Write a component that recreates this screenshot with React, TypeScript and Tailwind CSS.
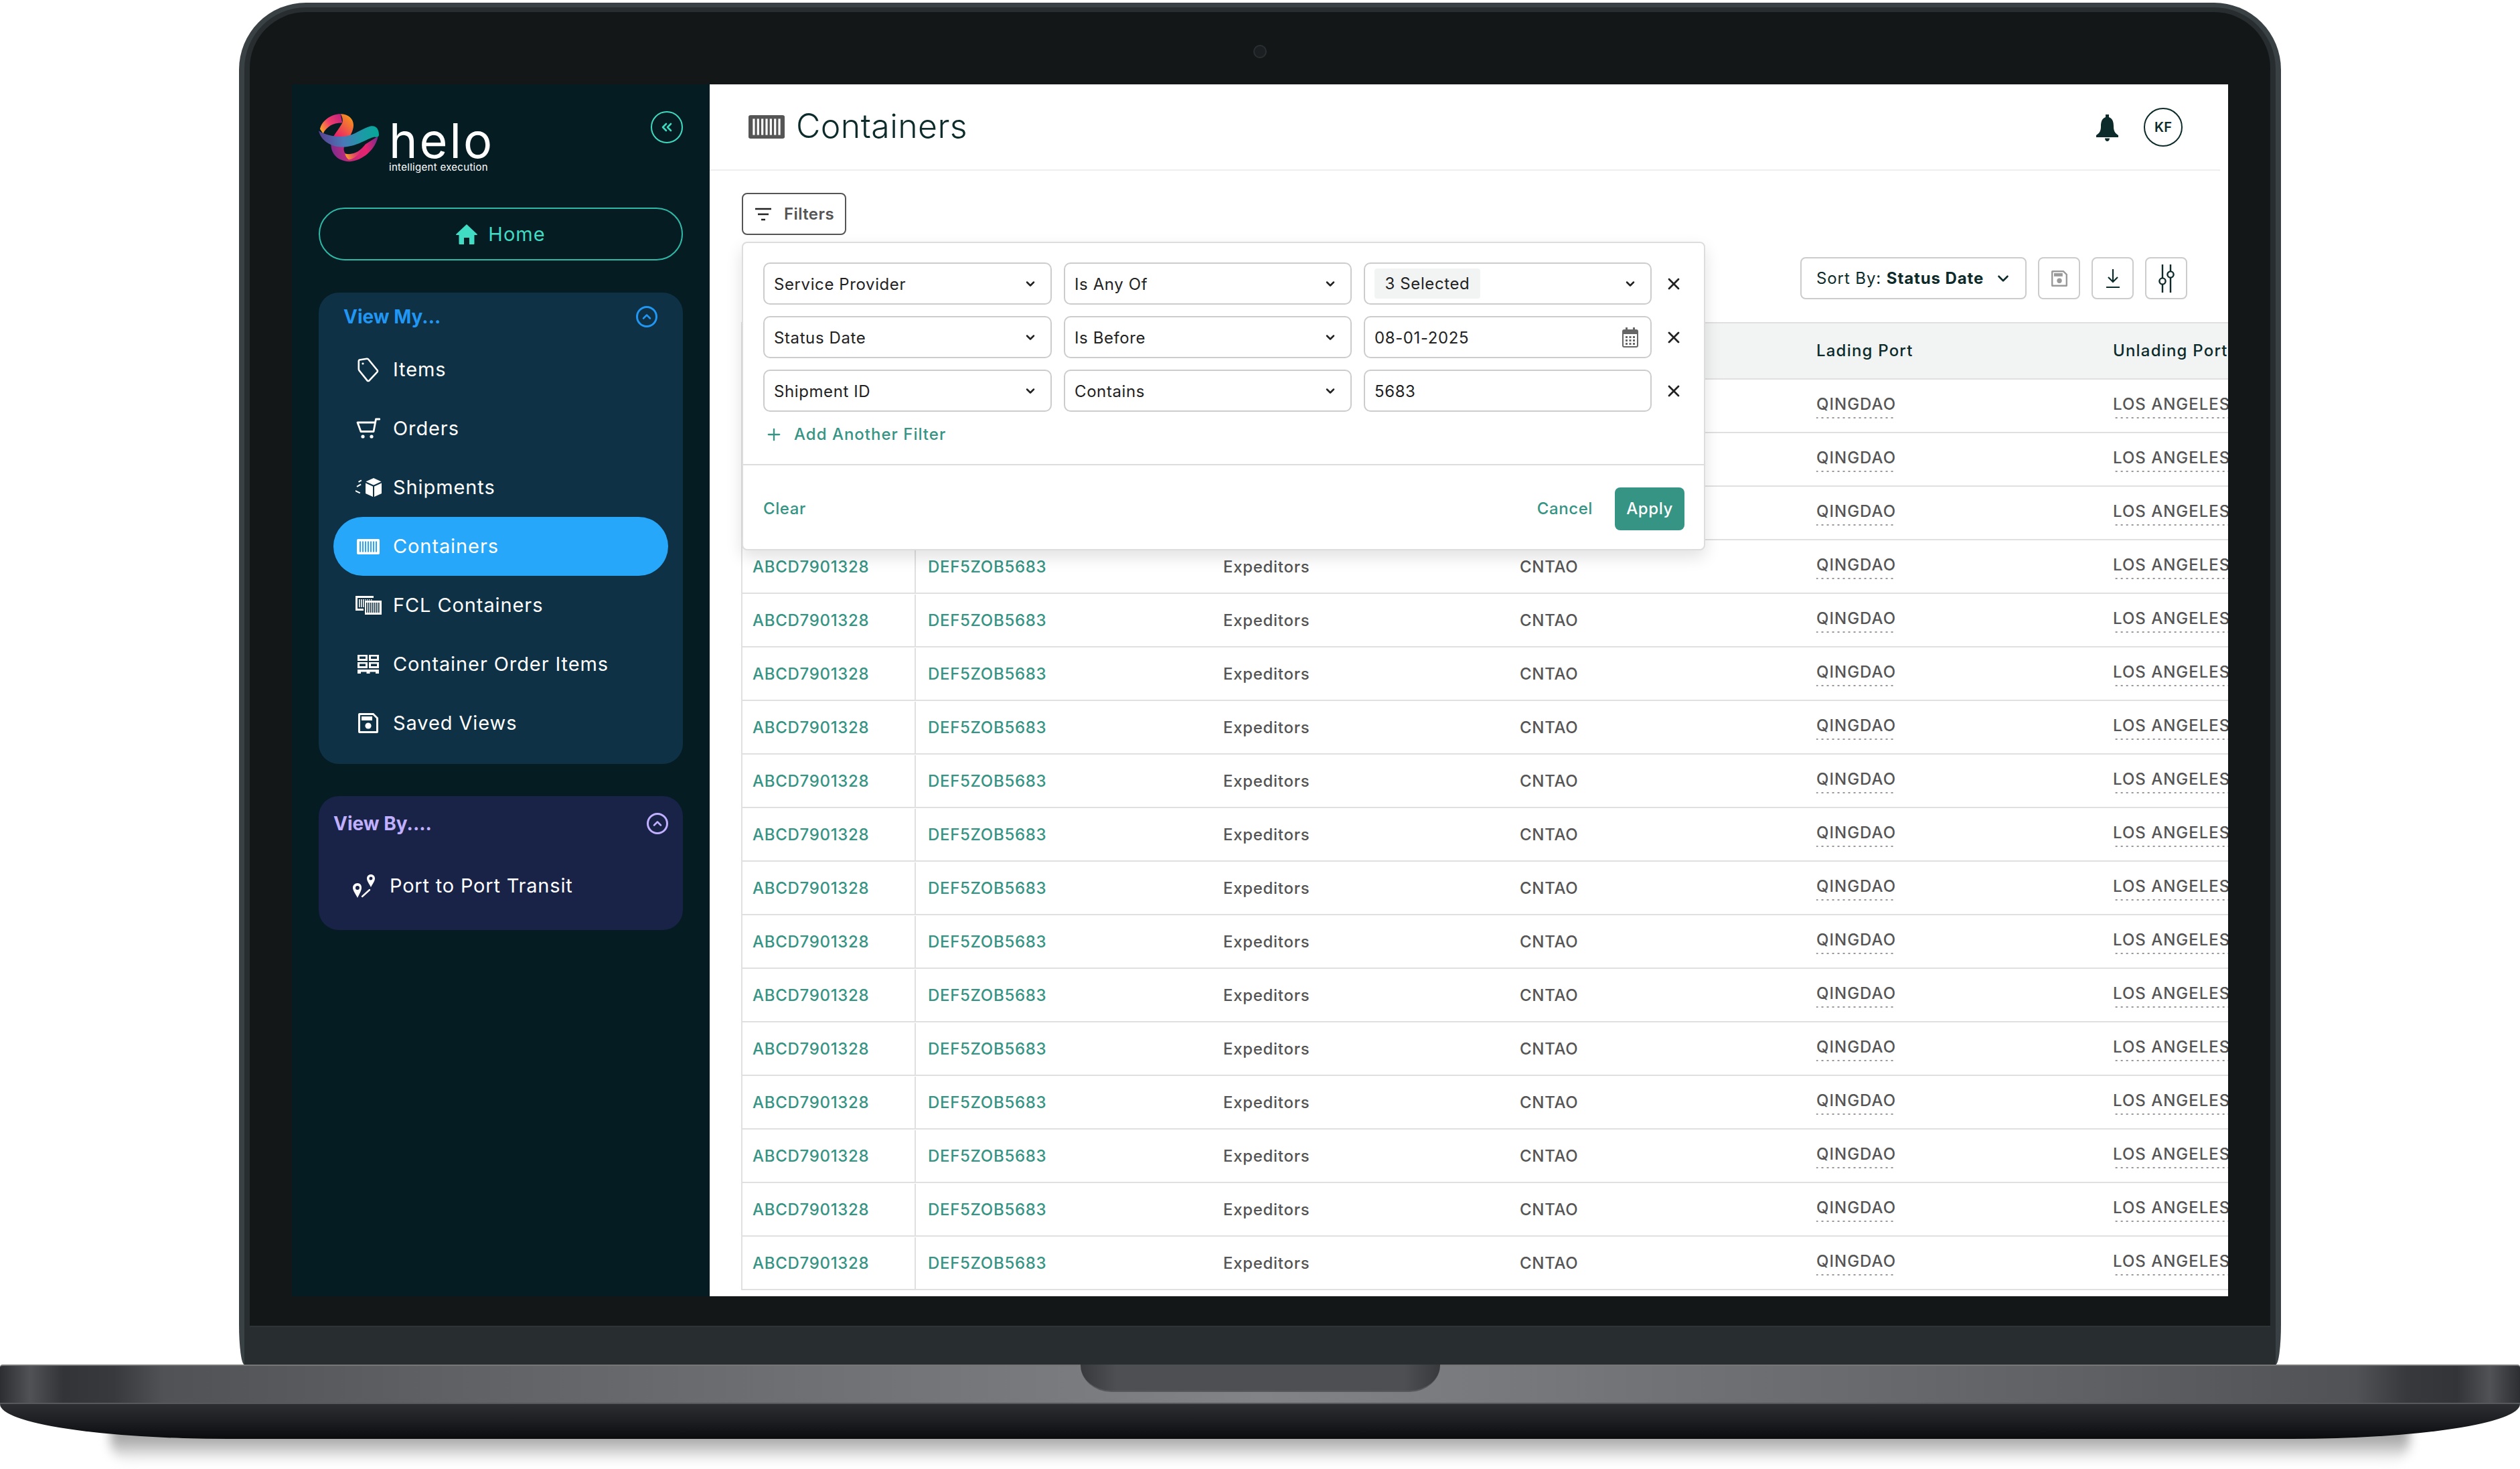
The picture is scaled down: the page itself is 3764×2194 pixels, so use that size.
import { ChevronDown, ChevronUp, ChevronsLeft, Plus, X } from "lucide-react";

// Icons drawn for the sidebar and the toolbar
function ContainerIcon({ className, bar }: { className?: string; bar: string }) {
  return (
    <svg viewBox="0 0 34 26" preserveAspectRatio="none" className={className} fill="currentColor">
      <rect width="34" height="26" rx="2" />
      {[4, 8, 12, 16, 20, 24, 28].map((x) => (
        <rect key={x} x={x} y="4" width="2" height="18" fill={bar} />
      ))}
    </svg>
  );
}

function TagIcon() {
  return (
    <svg viewBox="0 0 32 37" className="h-[37px] w-[32px]" fill="none" stroke="currentColor" strokeWidth="2.6" strokeLinejoin="round">
      <path d="M3 3.5 L14 1.8 Q15.5 1.6 16.5 3 L29.6 19 Q30.4 20.4 29.4 21.6 L17.5 34.4 Q16 35.6 14.6 34.4 L2.8 19.8 Q1.8 18.6 1.8 17 L1.8 5 Q1.8 3.8 3 3.5 Z" />
      <circle cx="8" cy="9" r="1.6" fill="currentColor" stroke="none" />
    </svg>
  );
}

function CartIcon() {
  return (
    <svg viewBox="0 0 36 32" className="h-[32px] w-[36px]" fill="none" stroke="currentColor" strokeWidth="2.8" strokeLinejoin="round" strokeLinecap="round">
      <path d="M35 2 H29.5 L26 20.5 H7 L2 7 H28.5" />
      <circle cx="10" cy="28" r="2.6" fill="currentColor" stroke="none" />
      <circle cx="23" cy="28" r="2.6" fill="currentColor" stroke="none" />
    </svg>
  );
}

function ShipmentIcon() {
  return (
    <svg viewBox="0 0 39 28" className="h-[28px] w-[39px]" fill="currentColor">
      <path d="M27 0 L38.5 5.2 L27 10.4 L15.5 5.2 Z" />
      <path d="M15 7.4 L26 12.4 V28 L15 23 Z" />
      <path d="M39 7.4 L28 12.4 V28 L39 23 Z" />
      <rect x="4" y="5" width="5" height="2" transform="rotate(-30 4 5)" />
      <rect x="1.5" y="12" width="7" height="2" transform="rotate(-30 1.5 12)" />
      <rect x="0" y="18" width="8" height="2" transform="rotate(25 0 18)" />
    </svg>
  );
}

function FclIcon() {
  return (
    <svg viewBox="0 0 39 28" className="h-[28px] w-[39px]" fill="currentColor">
      <path d="M0 0 H27 V3 H3 V19 H12 V22 H0 Z" />
      {[5, 8, 11].map((x) => (
        <rect key={x} x={x} y="5" width="1.6" height="12" />
      ))}
      {[14, 17, 20, 23].map((x) => (
        <rect key={x} x={x} y="5" width="1.4" height="1.6" />
      ))}
      <rect x="14" y="7" width="25" height="21" />
      {[16, 19, 22, 25, 28, 31, 34].map((x) => (
        <rect key={x} x={x} y="10" width="1.6" height="15" fill="#0e3145" />
      ))}
    </svg>
  );
}

function PalletIcon() {
  return (
    <svg viewBox="0 0 32 28" className="h-[28px] w-[32px]" fill="currentColor">
      <path fillRule="evenodd" d="M0 0 H15 V9 H0 Z M3 2.5 V6 H12 V2.5 Z M17 0 H32 V9 H17 Z M20 2.5 V6 H29 V2.5 Z" />
      <path fillRule="evenodd" d="M0 11 H15 V20 H0 Z M3 13.5 V17 H12 V13.5 Z M17 11 H32 V20 H17 Z M20 13.5 V17 H29 V13.5 Z" />
      <path d="M0 22 H32 V28 H27 V25.5 H18.5 V28 H13.5 V25.5 H5 V28 H0 Z" />
    </svg>
  );
}

function SaveIcon({ className }: { className?: string }) {
  return (
    <svg viewBox="0 0 30 30" className={className} fill="currentColor">
      <path fillRule="evenodd" d="M2 0 H23 L30 7 V28 Q30 30 28 30 H2 Q0 30 0 28 V2 Q0 0 2 0 Z M3 3 V27 H27 V8 L22 3 Z" />
      <rect x="5" y="5" width="16" height="6" />
      <circle cx="15" cy="19" r="4.6" />
    </svg>
  );
}

function PortIcon() {
  return (
    <svg viewBox="0 0 34 35" className="h-[35px] w-[34px]" fill="currentColor">
      <path fillRule="evenodd" d="M7 13 C3 13 0 16 0 20 C0 24 5 31 7 35 C9 31 13 24 13 20 C13 16 11 13 7 13 Z M7 17 A3 3 0 1 1 6.9 23 A3 3 0 0 1 7 17 Z" />
      <path fillRule="evenodd" d="M27 0 C23.5 0 21 2.6 21 6 C21 10 25 15 27 19 C29 15 33 10 33 6 C33 2.6 30.5 0 27 0 Z M27 3.5 A2.5 2.5 0 1 1 26.9 8.5 A2.5 2.5 0 0 1 27 3.5 Z" />
      <path d="M14 33 L25 23" stroke="currentColor" strokeWidth="2.4" strokeLinecap="round" fill="none" />
    </svg>
  );
}

function HomeIcon() {
  return (
    <svg viewBox="0 0 32 30" className="h-[30px] w-[32px]" fill="currentColor">
      <path d="M16 0 L32 15 Q32 16 31 16 H27.5 V29 Q27.5 30 26.5 30 H20 V20 H12 V30 H5.5 Q4.5 30 4.5 29 V16 H1 Q0 16 0 15 Z" />
    </svg>
  );
}

function HeloMark() {
  return (
    <svg viewBox="30 30 270 215" className="h-[72px] w-[90px] shrink-0">
      <defs>
        <linearGradient id="helo-top" x1="36" y1="100" x2="135" y2="40" gradientUnits="userSpaceOnUse">
          <stop offset="0" stopColor="#f9a825" />
          <stop offset="0.45" stopColor="#ef3e6a" />
          <stop offset="1" stopColor="#c01f80" />
        </linearGradient>
        <linearGradient id="helo-mid" x1="180" y1="50" x2="100" y2="130" gradientUnits="userSpaceOnUse">
          <stop offset="0" stopColor="#f7931e" />
          <stop offset="1" stopColor="#e8186f" />
        </linearGradient>
        <linearGradient id="helo-low" x1="85" y1="200" x2="296" y2="150" gradientUnits="userSpaceOnUse">
          <stop offset="0" stopColor="#7d2b8f" />
          <stop offset="0.35" stopColor="#c42a7a" />
          <stop offset="0.72" stopColor="#e8236f" />
          <stop offset="1" stopColor="#7a2c8c" />
        </linearGradient>
        <linearGradient id="helo-low-2" x1="150" y1="225" x2="225" y2="195" gradientUnits="userSpaceOnUse">
          <stop offset="0" stopColor="#fbb01f" />
          <stop offset="1" stopColor="#ef3e6a" stopOpacity="0" />
        </linearGradient>
        <linearGradient id="helo-band" x1="30" y1="130" x2="300" y2="110" gradientUnits="userSpaceOnUse">
          <stop offset="0" stopColor="#5a3f8f" />
          <stop offset="0.4" stopColor="#4a78b8" />
          <stop offset="0.72" stopColor="#1c9aa6" />
          <stop offset="1" stopColor="#05a898" />
        </linearGradient>
      </defs>
      <path d="M36 98 C42 62 85 30 128 30 L136 70 C100 68 65 85 50 118 Z" fill="url(#helo-top)" />
      <path d="M128 30 C170 30 195 60 183 100 C178 118 170 128 165 140 L95 132 C110 110 125 90 136 70 C140 55 135 40 128 30 Z" fill="url(#helo-mid)" />
      <path d="M85 165 C85 215 125 245 170 243 C225 240 285 190 296 130 L240 165 C215 198 185 215 150 208 C140 195 142 185 145 172 Z" fill="url(#helo-low)" />
      <path d="M148 208 C175 215 200 205 225 185 C215 215 180 235 165 235 C155 228 150 218 148 208 Z" fill="url(#helo-low-2)" />
      <path d="M30 105 C60 125 110 135 150 130 C190 125 225 95 262 85 C285 80 300 95 300 125 C298 135 290 135 280 133 C245 140 200 180 130 178 C85 176 40 150 30 105 Z" fill="url(#helo-band)" />
    </svg>
  );
}

function CalendarIcon() {
  return (
    <svg viewBox="0 0 24 30" className="h-[30px] w-[24px]" fill="#666">
      <path fillRule="evenodd" d="M5 0 H8 V3 H16 V0 H19 V3 H21 Q24 3 24 6 V27 Q24 30 21 30 H3 Q0 30 0 27 V6 Q0 3 3 3 H5 Z M2 10 V27 Q2 28 3 28 H21 Q22 28 22 27 V10 Z" />
      {[5, 10.5, 16].map((x) =>
        [13, 18, 23].map((y) => <rect key={`${x}-${y}`} x={x} y={y} width="3" height="3" />)
      )}
    </svg>
  );
}

const navItems = [
  { label: "Items", icon: <TagIcon /> },
  { label: "Orders", icon: <CartIcon /> },
  { label: "Shipments", icon: <ShipmentIcon /> },
  { label: "Containers", icon: <ContainerIcon className="h-[23px] w-[34px]" bar="#27a7f9" />, active: true },
  { label: "FCL Containers", icon: <FclIcon /> },
  { label: "Container Order Items", icon: <PalletIcon /> },
  { label: "Saved Views", icon: <SaveIcon className="h-[30px] w-[30px]" /> },
];

function Sidebar() {
  return (
    <aside className="flex w-[624px] shrink-0 flex-col bg-[#051c23] px-[40px] pt-[44px] text-white">
      <div className="flex h-[140px] items-start justify-between">
        <div className="flex gap-[15px]">
          <HeloMark />
          <div className="flex flex-col">
            <span className="mt-[10px] text-[72px] leading-[60px] font-normal tracking-[3px]">helo</span>
            <span className="mt-[2px] text-[15px] leading-[16px] tracking-[0.3px] whitespace-nowrap">intelligent execution</span>
          </div>
        </div>
        <button className="mt-[-4px] flex h-[48px] w-[48px] items-center justify-center rounded-full border-2 border-[#3fd9c0] text-[#3fd9c0]">
          <ChevronsLeft size={24} strokeWidth={2.6} />
        </button>
      </div>

      <button className="flex h-[79px] items-center justify-center gap-[16px] rounded-full border-2 border-[#2fb8a6] text-[29px] tracking-[1px] text-[#40dcc4]">
        <HomeIcon />
        Home
      </button>

      <section className="mt-[48px] rounded-[30px] bg-[#0e3145] pb-[17px]">
        <div className="flex h-[71px] items-center justify-between pr-[38px] pl-[37px] text-[#2196f3]">
          <span className="text-[28px] font-bold">View My...</span>
          <span className="flex h-[32px] w-[32px] items-center justify-center rounded-full border-[3px] border-[#2196f3]">
            <ChevronUp size={20} strokeWidth={3} />
          </span>
        </div>
        <div className="flex flex-col px-[22px]">
          {navItems.map((item) => (
            <div
              key={item.label}
              className={`flex h-[88px] items-center rounded-full pl-[28px] text-[29px] tracking-[0.9px] ${item.active ? "bg-[#27a7f9]" : ""}`}
            >
              <span className="mr-[13px] flex w-[48px] justify-center">{item.icon}</span>
              {item.label}
            </div>
          ))}
        </div>
      </section>

      <section className="mt-[48px] h-[200px] rounded-[30px] bg-[#192348]">
        <div className="flex h-[82px] items-center justify-between px-[22px] text-[#c0b0ff]">
          <span className="text-[28px] font-bold">View By....</span>
          <span className="flex h-[32px] w-[32px] items-center justify-center rounded-full border-[3px] border-[#c0b0ff]">
            <ChevronUp size={20} strokeWidth={3} />
          </span>
        </div>
        <div className="mt-[8px] flex h-[88px] items-center gap-[21px] pl-[51px] text-[29px] tracking-[0.8px]">
          <PortIcon />
          Port to Port Transit
        </div>
      </section>
    </aside>
  );
}

function Select({ label, width }: { label: string; width: string }) {
  return (
    <div className={`flex h-[63px] items-center justify-between rounded-[10px] border-2 border-[#ccc] pr-[20px] pl-[14px] ${width}`}>
      <span className="pt-[2px]">{label}</span>
      <ChevronDown size={20} strokeWidth={3} />
    </div>
  );
}

function FilterPanel() {
  return (
    <div className="absolute top-[235px] left-[48px] z-10 w-[1439px] rounded-[8px] border-2 border-[#ddd] bg-white text-[24px] tracking-[0.6px] text-[#222] shadow-[0_10px_24px_rgba(0,0,0,0.12)]">
      <div className="h-[332px] border-b-2 border-[#ddd] pt-[29px] pl-[30px]">
        <div className="flex flex-col gap-[17px]">
          <div className="flex items-center gap-[18px]">
            <Select label="Service Provider" width="w-[431px]" />
            <Select label="Is Any Of" width="w-[430px]" />
            <div className="flex h-[63px] w-[430px] items-center justify-between rounded-[10px] border-2 border-[#ccc] pr-[20px] pl-[14px]">
              <span className="flex h-[45px] w-[158px] items-center justify-center rounded-[4px] bg-[#f2f4f4]">3 Selected</span>
              <ChevronDown size={20} strokeWidth={3} />
            </div>
            <X size={28} strokeWidth={2.4} className="ml-[1px]" />
          </div>
          <div className="flex items-center gap-[18px]">
            <Select label="Status Date" width="w-[431px]" />
            <Select label="Is Before" width="w-[430px]" />
            <div className="flex h-[63px] w-[430px] items-center justify-between rounded-[10px] border-2 border-[#ccc] pr-[18px] pl-[14px]">
              <span className="pt-[2px]">08-01-2025</span>
              <CalendarIcon />
            </div>
            <X size={28} strokeWidth={2.4} className="ml-[1px]" />
          </div>
          <div className="flex items-center gap-[18px]">
            <Select label="Shipment ID" width="w-[431px]" />
            <Select label="Contains" width="w-[430px]" />
            <div className="flex h-[63px] w-[430px] items-center rounded-[10px] border-2 border-[#ccc] pt-[2px] pl-[14px]">5683</div>
            <X size={28} strokeWidth={2.4} className="ml-[1px]" />
          </div>
        </div>
        <div className="mt-[17px] flex h-[34px] items-center gap-[16px] pl-[2px] font-medium tracking-[1px] text-[#369484]">
          <Plus size={28} strokeWidth={2} />
          Add Another Filter
        </div>
      </div>
      <div className="flex h-[125px] items-center justify-between pt-[4px] pr-[29px] pl-[30px] font-medium text-[#369484]">
        <span>Clear</span>
        <div className="flex items-center gap-[33px]">
          <span>Cancel</span>
          <button className="h-[64px] w-[104px] rounded-[8px] bg-[#369484] text-white">Apply</button>
        </div>
      </div>
    </div>
  );
}

const cellClass = "flex items-center pl-[18px]";
const underlineClass =
  "mt-[-3px] bg-[linear-gradient(90deg,#999_3px,transparent_3px)] bg-[length:8px_2px] bg-bottom bg-repeat-x pb-[3px] leading-[36px] tracking-[1px] whitespace-nowrap";

function Row() {
  return (
    <div className="grid h-[80px] grid-cols-[259px_441px_443px_443px_443px_443px] border-b-2 border-l-2 border-[#e0e0e0] pt-[1px] text-[24px] font-medium tracking-[0.7px] text-[#555]">
      <div className="flex items-center border-r-2 border-[#e0e0e0] pl-[15px] text-[#369484]">ABCD7901328</div>
      <div className={`${cellClass} text-[#369484]`}>DEF5ZOB5683</div>
      <div className={cellClass}>Expeditors</div>
      <div className={cellClass}>CNTAO</div>
      <div className={cellClass}>
        <span className={underlineClass}>QINGDAO</span>
      </div>
      <div className={cellClass}>
        <span className={underlineClass}>LOS ANGELES</span>
      </div>
    </div>
  );
}

function Main() {
  return (
    <main className="relative flex min-w-0 flex-1 flex-col overflow-hidden bg-white">
      <header className="mr-[12px] flex h-[129px] shrink-0 items-center justify-between border-b-2 border-[#eee] pr-[56px] pl-[58px]">
        <div className="flex items-center gap-[17px] text-[50px] leading-[60px] font-light tracking-[0.4px] text-[#0d2b2b]">
          <ContainerIcon className="h-[35px] w-[54px] text-[#555]" bar="#fff" />
          <span className="mt-[-4px]">Containers</span>
        </div>
        <div className="flex items-center gap-[38px] text-[#0d2b2b]">
          <svg viewBox="0 0 33 40" className="mt-[2px] h-[40px] w-[33px]" fill="currentColor">
            <path d="M14 0 H19 V4 C25 6 26 12 26 18 C26 24 28 28 33 31 V34 H0 V31 C5 28 7 24 7 18 C7 12 8 6 14 4 Z" />
            <path d="M13 35.5 H20 C20 38 18.5 40 16.5 40 C14.5 40 13 38 13 35.5 Z" />
          </svg>
          <span className="flex h-[58px] w-[58px] items-center justify-center rounded-full border-2 border-[#0d2b2b] text-[20px] font-semibold">KF</span>
        </div>
      </header>

      <div className="px-[48px] pt-[33px]">
        <button className="flex h-[63px] w-[156px] items-center gap-[19px] rounded-[8px] border-2 border-[#555] pt-[1px] pl-[18px] text-[24px] font-semibold tracking-[0.4px] text-[#555]">
          <svg viewBox="0 0 24 20" className="h-[20px] w-[24px]" stroke="#222" strokeWidth="2.4">
            <path d="M0 2 H24 M4 10 H20 M9 18 H15" />
          </svg>
          Filters
        </button>
      </div>

      <div className="mt-[33px] flex h-[63px] shrink-0 justify-end gap-[17px] pr-[61px] text-[#0d2b2b]">
        <div className="flex w-[338px] items-center justify-between rounded-[8px] border-2 border-[#ccc] pr-[20px] pl-[22px] text-[24px] tracking-[0.9px]">
          <span>
            Sort By: <b className="font-bold">Status Date</b>
          </span>
          <ChevronDown size={26} strokeWidth={2.4} />
        </div>
        <div className="flex w-[63px] items-center justify-center rounded-[8px] border-2 border-[#ccc] text-[#999]">
          <SaveIcon className="h-[24px] w-[24px]" />
        </div>
        <div className="flex w-[63px] items-center justify-center rounded-[8px] border-2 border-[#ccc]">
          <svg viewBox="0 0 20 28" className="h-[28px] w-[20px]" fill="none" stroke="currentColor" strokeWidth="2.2">
            <path d="M10 0 V19 M3 12 L10 19 L17 12 M0 27 H20" />
          </svg>
        </div>
        <div className="flex w-[63px] items-center justify-center rounded-[8px] border-2 border-[#ccc]">
          <svg viewBox="0 0 24 42" className="h-[42px] w-[24px]" fill="none" stroke="currentColor" strokeWidth="2.4">
            <path d="M6 0 V20 M6 30 V42 M18 0 V10 M18 20 V42" />
            <circle cx="6" cy="25" r="4.6" />
            <circle cx="18" cy="15" r="4.6" />
          </svg>
        </div>
      </div>

      <div className="mt-[34px] ml-[47px] flex flex-col">
        <div className="grid h-[86px] grid-cols-[259px_441px_443px_443px_443px_443px] border-y-2 border-l-2 border-[#e0e0e0] bg-[#f2f4f4] text-[24px] font-medium tracking-[1.2px] text-[#0d2b2b]">
          <div />
          <div />
          <div />
          <div />
          <div className={cellClass}>Lading Port</div>
          <div className={`${cellClass} whitespace-nowrap`}>Unlading Port</div>
        </div>
        {Array.from({ length: 17 }, (_, i) => (
          <Row key={i} />
        ))}
      </div>

      <FilterPanel />
    </main>
  );
}

export default function App() {
  return (
    <div className="relative h-[2194px] w-[3764px] overflow-hidden bg-white pt-[4px] font-[Inter,sans-serif]">
      {/* Lid of the laptop */}
      <div className="relative z-10 ml-[357px] w-[3050px] rounded-t-[100px] rounded-b-[8px_60px] bg-[#3a4144] px-[8px] pt-[7px]">
        <div className="rounded-t-[92px] bg-[#282d30] px-[8px] pt-[7px] pb-[56px]">
          <div className="rounded-t-[84px] border-b-2 border-[#2f3437] bg-[#131718] px-[63px] pb-[44px]">
            <div className="flex h-[108px] items-center justify-center pt-[10px]">
              <span className="h-[20px] w-[20px] rounded-full border-2 border-[#2a2f31] bg-[#1b1f21]" />
            </div>
            <div className="flex h-[1810px] w-[2892px]">
              <Sidebar />
              <Main />
            </div>
          </div>
        </div>
      </div>

      {/* Base of the laptop */}
      <div className="relative z-10 h-[59px] rounded-t-[4px] border-t-2 border-b-2 border-t-[#777] border-b-[#56585c] bg-[linear-gradient(90deg,#2c2e32_0%,#505256_1.2%,#333438_2.5%,#38393d_4.5%,#505256_6.5%,#5f6063_17%,#828386_50%,#5f6063_83%,#505256_93.5%,#38393d_95.5%,#333438_97.5%,#505256_98.8%,#2c2e32_100%)]">
        <div className="absolute top-[-2px] left-[1614px] h-[41px] w-[537px] rounded-b-[46px_40px] border-b-2 border-[#56585c] bg-[linear-gradient(90deg,#38393d_0%,#4e4f53_10%,#4e4f53_90%,#38393d_100%)]" />
      </div>
      <div className="relative z-10 h-[52px] rounded-b-[340px_52px] bg-[linear-gradient(180deg,#2c2e32_0%,#1c1e22_50%,#0a0b0d_100%)]" />
      <div className="absolute top-[2100px] right-[165px] left-[165px] h-[84px] rounded-b-[30px] bg-[linear-gradient(180deg,#999_0%,#a8a8a8_58%,#fff_100%)] blur-[8px]" />
    </div>
  );
}
